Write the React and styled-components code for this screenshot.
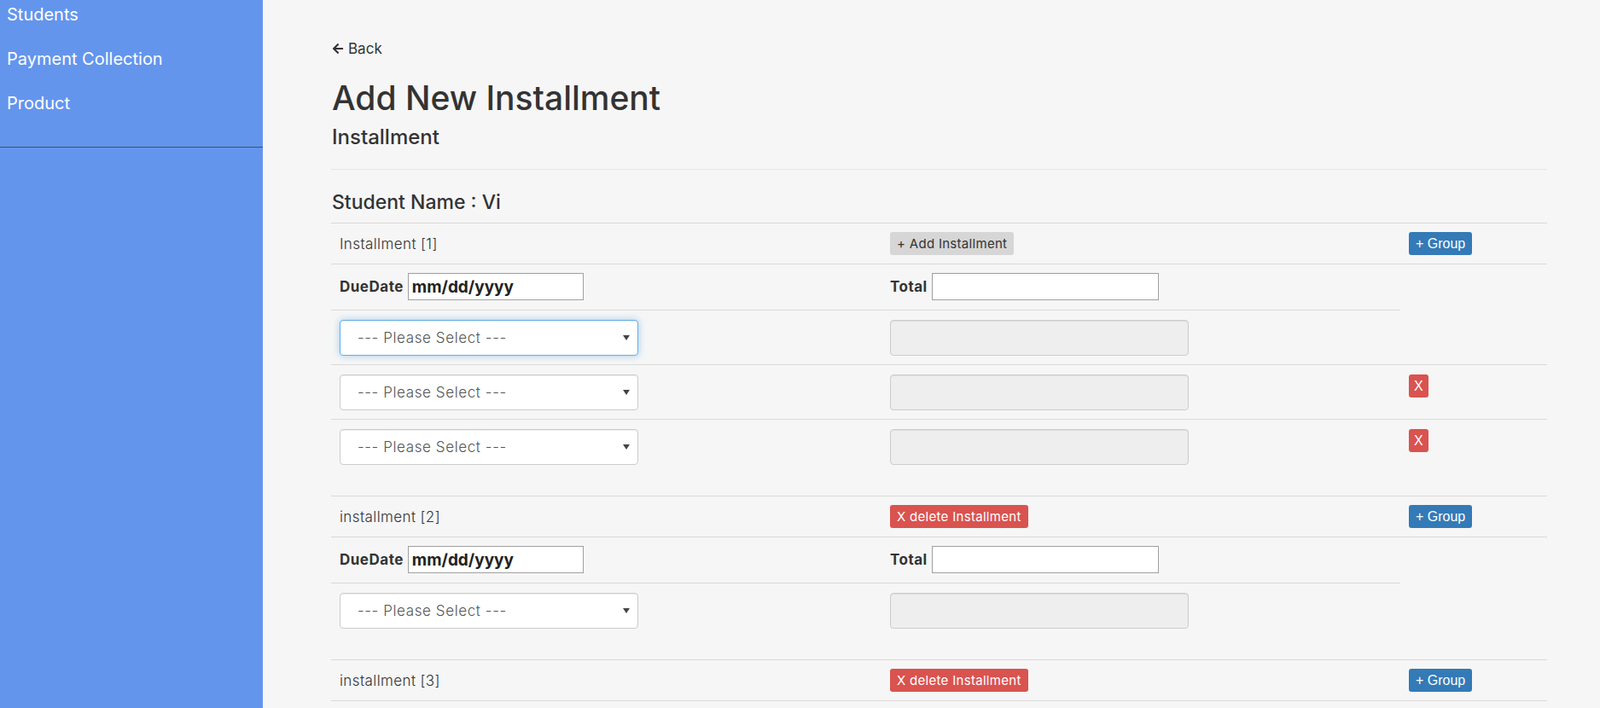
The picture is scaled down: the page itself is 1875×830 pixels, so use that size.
import React from 'react'
import styled, { createGlobalStyle } from 'styled-components'
import { FaArrowLeft } from 'react-icons/fa'

const GlobalStyle = createGlobalStyle`
  html, body {
    margin: 0;
    padding: 0;
    overflow: hidden;
  }
  body {
    font-family: Inter, "Noto Sans", sans-serif;
    color: #333;
    background: #f6f6f6;
  }
`

const Body = styled.div`
  display: flex;
  height: 100vh;
  overflow: hidden;
`

const SideBar = styled.div`
  width: 308px;
  flex-shrink: 0;
  background-color: cornflowerblue;
  display: flex;
  flex-direction: column;
`

const NavList = styled.ul`
  list-style: none;
  margin: 0;
  padding: 5px 0 0 0;
  border-bottom: 1px solid #2f5a6a;
  height: 167px;
`

const NavItem = styled.li`
  color: #fff;
  font-size: 20px;
  line-height: 24px;
  height: 52px;
  padding-left: 8px;
`

const Main = styled.div`
  flex: 1;
  padding: 46px 62px 0 80px;
`

const BackLink = styled.a`
  display: flex;
  align-items: center;
  gap: 5px;
  color: #333;
  font-size: 17px;
  line-height: 22px;
  text-decoration: none;
  margin-left: 1px;
`

const Title = styled.h1`
  font-size: 39px;
  font-weight: 500;
  line-height: 48px;
  margin: 23px 0 0 1px;
`

const SubTitle = styled.h4`
  font-size: 24px;
  font-weight: 500;
  line-height: 28px;
  margin: 8px 0 0 1px;
`

const Divider = styled.hr`
  border: 0;
  border-top: 1px solid #e6e6e6;
  margin: 23px 0 0 0;
`

const StudentName = styled.h4`
  font-size: 23px;
  font-weight: 500;
  line-height: 28px;
  margin: 24px 0 10px 1px;
`

const Table = styled.table`
  width: 1425px;
  border-collapse: collapse;
  table-layout: fixed;
  border-bottom: 1px solid #d9d9d9;
`

const Cell = styled.td`
  border-top: 1px solid #d9d9d9;
  padding: ${p => p.$head ? '10px' : '11px 10px ' + (p.$last ? '36px' : '10px') + ' 10px'};
  padding-bottom: ${p => p.$date ? '11px' : null};
  padding-top: ${p => p.$date ? '10px' : null};
  vertical-align: ${p => p.$head ? 'middle' : 'top'};
  font-size: 15px;
`

const RowTitle = styled.span`
  font-weight: 300;
  font-size: 17px;
  letter-spacing: 0.4px;
  color: #333;
`

const Btn = styled.button`
  height: 27px;
  border: 0;
  border-radius: 3px;
  padding: 0 8px;
  font-size: 15px;
  letter-spacing: 0.3px;
  font-family: Inter, "Noto Sans", sans-serif;
  color: ${p => p.$tone === 'light' ? '#333' : '#fff'};
  background: ${p => p.$tone === 'light' ? '#d6d6d6' : p.$tone === 'danger' ? '#d9534f' : '#337ab7'};
  display: block;
`

const ArialBtn = styled(Btn)`
  font-family: "Liberation Sans", Arial, sans-serif;
  font-size: 16px;
  letter-spacing: 0;
  padding: 0 ${p => p.$small ? '6px' : '8px'};
`

const Field = styled.div`
  display: flex;
  align-items: center;
  gap: 5px;
  height: 32px;
`

const Label = styled.label`
  font-weight: 700;
  font-size: 17px;
  letter-spacing: 0.5px;
  color: #333;
`

const TextBox = styled.input`
  box-sizing: border-box;
  width: ${p => p.$w}px;
  height: 32px;
  border: 1px solid #a0a0a0;
  background: #fff;
  padding: 0 4px;
  font-family: Inter, "Noto Sans", sans-serif;
  font-weight: 700;
  font-size: 19px;
  color: #222;
  outline: none;
`

const SelectWrap = styled.div`
  position: relative;
  width: 350px;
  &::after {
    content: '';
    position: absolute;
    right: 10px;
    top: 18px;
    border-left: 4px solid transparent;
    border-right: 4px solid transparent;
    border-top: 6px solid #444;
    pointer-events: none;
  }
`

const Select = styled.select`
  appearance: none;
  box-sizing: border-box;
  width: 350px;
  height: 42px;
  padding: 0 20px;
  font-family: Inter, "Noto Sans", sans-serif;
  font-size: 17px;
  letter-spacing: 0.6px;
  font-weight: 300;
  color: #555;
  background: #fff;
  border: 1px solid ${p => p.$focused ? '#66afe9' : '#ccc'};
  border-radius: 4px;
  box-shadow: ${p => p.$focused
    ? 'inset 0 1px 1px rgba(0,0,0,.075), 0 0 8px rgba(102,175,233,.6)'
    : 'inset 0 1px 1px rgba(0,0,0,.075)'};
  outline: none;
`

const Disabled = styled.input`
  box-sizing: border-box;
  width: 350px;
  height: 42px;
  background: #eee;
  border: 1px solid #ccc;
  border-radius: 4px;
  box-shadow: inset 0 1px 1px rgba(0,0,0,.075);
`

const PleaseSelect = ({ focused }) => (
  <SelectWrap>
    <Select $focused={focused} defaultValue="">
      <option value="">--- Please Select ---</option>
    </Select>
  </SelectWrap>
)

const HeadRow = ({ title, first }) => (
  <tr>
    <Cell $head><RowTitle>{title}</RowTitle></Cell>
    <Cell $head>
      {first
        ? <Btn $tone="light">+ Add Installment</Btn>
        : <Btn $tone="danger">X delete Installment</Btn>}
    </Cell>
    <Cell $head><ArialBtn>+ Group</ArialBtn></Cell>
  </tr>
)

const DateRow = () => (
  <tr>
    <Cell $date>
      <Field>
        <Label>DueDate</Label>
        <TextBox $w={206} readOnly value="mm/dd/yyyy" />
      </Field>
    </Cell>
    <Cell $date>
      <Field>
        <Label>Total</Label>
        <TextBox $w={266} readOnly value="" />
      </Field>
    </Cell>
    <Cell rowSpan={2}></Cell>
  </tr>
)

const ItemRow = ({ focused, last, remove }) => (
  <tr>
    <Cell $last={last}><PleaseSelect focused={focused} /></Cell>
    <Cell $last={last}><Disabled disabled /></Cell>
    {remove && <Cell $last={last}><ArialBtn $tone="danger" $small>X</ArialBtn></Cell>}
  </tr>
)

export default function App() {
  return (
    <Body>
      <GlobalStyle />
      <SideBar>
        <NavList>
          <NavItem>Students</NavItem>
          <NavItem>Payment Collection</NavItem>
          <NavItem>Product</NavItem>
        </NavList>
      </SideBar>
      <Main>
        <BackLink href="#"><FaArrowLeft size={14} />Back</BackLink>
        <Title>Add New Installment</Title>
        <SubTitle>Installment</SubTitle>
        <Divider />
        <StudentName>Student Name : Vi</StudentName>
        <Table>
          <colgroup>
            <col style={{ width: 645 }} />
            <col style={{ width: 608 }} />
            <col style={{ width: 172 }} />
          </colgroup>
          <tbody>
            <HeadRow title="Installment [1]" first />
            <DateRow />
            <ItemRow focused />
            <ItemRow remove />
            <ItemRow remove last />

            <HeadRow title="installment [2]" />
            <DateRow />
            <ItemRow last />

            <HeadRow title="installment [3]" />
          </tbody>
        </Table>
      </Main>
    </Body>
  )
}
